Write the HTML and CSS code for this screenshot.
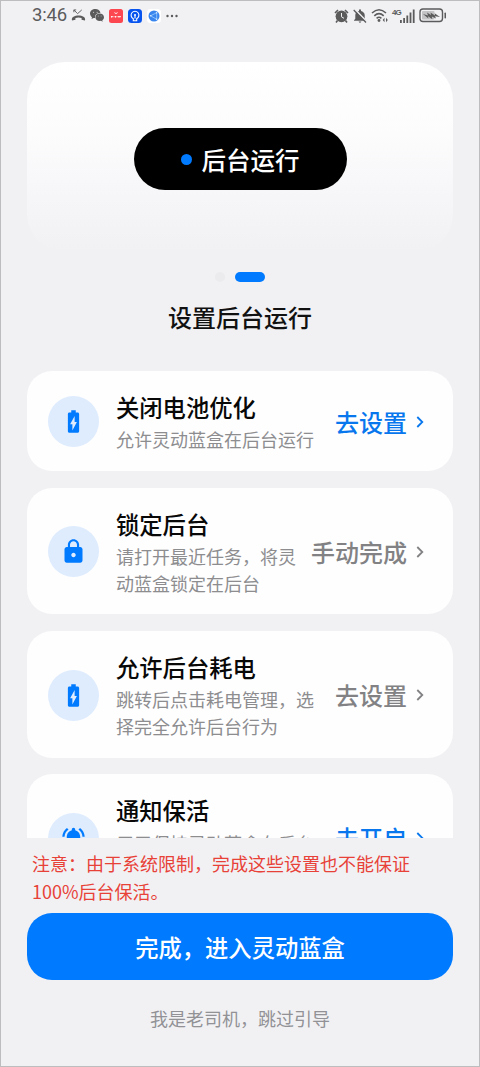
FILE: index.html
```html
<!DOCTYPE html>
<html lang="zh-CN">
<head>
<meta charset="utf-8">
<title>设置后台运行</title>
<link rel="stylesheet" href="styles.css">
</head>
<body>
<svg class="defs" width="0" height="0">
  <symbol id="battery" viewBox="0 0 24 24"><path d="M15.67 4H14V2h-4v2H8.33C7.6 4 7 4.6 7 5.33v15.33C7 21.4 7.6 22 8.33 22h7.33c.74 0 1.34-.6 1.34-1.33V5.33C17 4.6 16.4 4 15.67 4zM11 20v-5.5H9L13 7v5.5h2L11 20z"/></symbol>
  <symbol id="lock" viewBox="0 0 24 24"><path d="M18 8h-1V6c0-2.76-2.24-5-5-5S7 3.240 7 6v2H6c-1.100 0-2 .9-2 2v10c0 1.100.9 2 2 2h12c1.100 0 2-.9 2-2V10c0-1.100-.9-2-2-2zm-6 9c-1.100 0-2-.9-2-2s.9-2 2-2 2 .9 2 2-.9 2-2 2zm3.100-9H8.900V6c0-1.710 1.390-3.100 3.100-3.100s3.100 1.390 3.100 3.100v2z"/></symbol>
  <symbol id="bell" viewBox="0 0 24 24"><path d="M7.580 4.080L6.150 2.650C3.750 4.480 2.170 7.300 2.030 10.500h2c.15-2.650 1.510-4.970 3.550-6.420zm12.390 6.420h2c-.15-3.200-1.730-6.020-4.120-7.850l-1.420 1.430c2.020 1.450 3.390 3.770 3.540 6.420zM18 11c0-3.070-1.640-5.640-4.500-6.320V4c0-.83-.67-1.500-1.500-1.500s-1.500.67-1.500 1.500v.68C7.630 5.360 6 7.920 6 11v5l-2 2v1h16v-1l-2-2v-5zm-6 11c1.100 0 2-.9 2-2h-4c0 1.100.9 2 2 2z"/></symbol>
  <symbol id="chevron" viewBox="0 0 8 12"><path d="M1.300 1l5 5-5 5" fill="none" stroke="currentColor" stroke-width="1.800"/></symbol>
</svg>
<main class="phone">
  <header class="status">
    <div class="status-left">
      <span class="clock">3:46</span>
      <svg class="missed" viewBox="0 0 16 14"><path d="M1 12.500c-1-4 3-5.500 7-5.500s8 1.500 7 5.500l-3.700-.8V9.700q-3.300-1-6.600 0v2z"/><path d="M3 1l4 4 4.500-4M3 3.500V1h2.500" fill="none" stroke="currentColor"/></svg>
      <svg class="wechat" viewBox="0 0 14 13"><path d="M5.400 0C2.400 0 0 2 0 4.600c0 1.500.8 2.800 2 3.600L1.500 10l2.100-1.100 1.500.2C4.500 6 7 3.800 10.500 3.700 10 1.500 8 0 5.400 0z"/><path d="M9.700 4.400c-2.500 0-4.300 1.700-4.300 3.800S7.200 12 9.700 12l1.300-.2 1.700 1-.4-1.600c1-.7 1.700-1.700 1.700-3 0-2.100-1.900-3.800-4.300-3.800z"/><g fill="#f1f1f4"><circle cx="3.600" cy="3.200" r=".5"/><circle cx="7.100" cy="3.200" r=".5"/><circle cx="8.200" cy="7" r=".4"/><circle cx="11.100" cy="7" r=".4"/></g></svg>
      <svg class="app" viewBox="0 0 14 14"><rect width="14" height="14" rx="2.500" fill="#fc4650"/><path d="M5.400 3.600l1.600 1 1.600-1M2 7.700h2.500M5.500 7.700h2M8.500 7.700H12M2.500 8.500v-1.300M6.500 8.500v-1.300M10 8.500v-1.300" fill="none" stroke="#fff" stroke-width=".9"/></svg>
      <svg class="app" viewBox="0 0 14 14"><rect width="14" height="14" rx="3.500" fill="#0754ef"/><path d="M5.300 9.700a3.900 3.900 0 1 1 3.400 0v2.100H5.300zM7 6.500v3" fill="none" stroke="#fff" stroke-width="1.100"/><circle cx="7" cy="6" r="1" fill="#fff"/></svg>
      <svg class="app" viewBox="0 0 14 14"><rect width="14" height="14" rx="3.500" fill="#fff"/><circle cx="7" cy="7" r="5.500" fill="#3985ee"/><path d="M9.700 3.700L3.500 6.800l6.200 3.500z" fill="none" stroke="#9bcbff" stroke-width=".8"/><circle cx="9.600" cy="3.800" r=".8" fill="#d8edff"/><circle cx="3.700" cy="6.800" r=".8" fill="#d8edff"/><circle cx="9.600" cy="10.200" r=".8" fill="#d8edff"/></svg>
      <svg class="more" viewBox="0 0 12 4"><circle cx="1.500" cy="2" r="1.200"/><circle cx="6" cy="2" r="1.200"/><circle cx="10.500" cy="2" r="1.200"/></svg>
    </div>
    <div class="status-right">
      <svg class="alarm" viewBox="0 0 15 14"><circle cx="7.500" cy="7.300" r="5.900"/><path d="M1 4l3-3M14 4l-3-3M3.500 11.500L2 13.400M11.500 11.500l1.500 1.900" stroke="currentColor" stroke-width="1.600"/><path d="M7.500 4v3.800l2.500 1.500" fill="none" stroke="#f1f1f4" stroke-width="1"/></svg>
      <svg class="mute" viewBox="0 0 14 14"><path d="M2.300 9.700V6c0-2.200 1.800-3.700 3.700-4V.5h2V2c1.900.4 3.700 2 3.700 4v3.700l1.300 1.500v.6H1v-.6zM5.500 12.500h3L7 14z"/><path d="M2 .5l12 12.500" stroke="#f1f1f4" stroke-width="1.800"/><path d="M.7 1l12.300 12.500" stroke="currentColor" stroke-width="1.300"/></svg>
      <svg class="wifi" viewBox="0 0 18 15"><path d="M1 5Q8 -1.500 15 5M3.300 7.800q4.700-4.300 9.400 0M5.600 10.300Q8 8.200 10.400 10.300" fill="none" stroke="currentColor" stroke-width="1.600"/><circle cx="8" cy="12.500" r="1.400"/><path d="M13.500 9.800L11.700 12l1.800 2.200zM15 9.800L16.800 12 15 14.200z"/></svg>
      <div class="cell"><span class="net">4G</span>
      <svg class="signal" viewBox="0 0 15 14"><path d="M0 11h1.800v3H0zM3.200 9H5v5H3.200zM6.400 6.500h1.800V14H6.400zM9.600 3.500h1.800V14H9.600zM12.800.5h1.800V14h-1.800z"/></svg></div>
      <svg class="power" viewBox="0 0 28 15"><rect x="1" y="1" width="22.500" height="12.500" rx="3" fill="none" stroke="currentColor" stroke-width="1.400"/><rect x="3" y="3" width="12.500" height="8.500" rx="1" opacity=".3"/><path d="M4 6l5 1.500-1-3 4 2.600-.5-2.700 4.500 3-.4-2.200L21 9l-5-.8 1 2.400-4.200-2.100.6 2.700-4.400-3 .4 2.300z"/><rect x="25.500" y="4.500" width="1.500" height="6" rx=".7"/></svg>
    </div>
  </header>
  <section class="hero"><div class="island"><i class="island-dot"></i><span>后台运行</span></div></section>
  <div class="pager"><i class="page"></i><i class="page current"></i></div>
  <h1 class="title">设置后台运行</h1>
  <section class="list">
    <article class="card">
      <div class="badge"><svg class="icon"><use href="#battery"/></svg></div>
      <div class="info"><h2 class="name">关闭电池优化</h2><p class="desc">允许灵动蓝盒在后台运行</p></div>
      <div class="action primary"><span>去设置</span><svg class="chevron"><use href="#chevron"/></svg></div>
    </article>
    <article class="card">
      <div class="badge"><svg class="icon"><use href="#lock"/></svg></div>
      <div class="info"><h2 class="name">锁定后台</h2><p class="desc">请打开最近任务，将灵动蓝盒锁定在后台</p></div>
      <div class="action"><span>手动完成</span><svg class="chevron"><use href="#chevron"/></svg></div>
    </article>
    <article class="card">
      <div class="badge"><svg class="icon"><use href="#battery"/></svg></div>
      <div class="info"><h2 class="name">允许后台耗电</h2><p class="desc">跳转后点击耗电管理，选择完全允许后台行为</p></div>
      <div class="action"><span>去设置</span><svg class="chevron"><use href="#chevron"/></svg></div>
    </article>
    <article class="card">
      <div class="badge"><svg class="icon"><use href="#bell"/></svg></div>
      <div class="info"><h2 class="name">通知保活</h2><p class="desc">用于保持灵动蓝盒在后台持续稳定运行</p></div>
      <div class="action primary"><span>去开启</span><svg class="chevron"><use href="#chevron"/></svg></div>
    </article>
  </section>
  <footer class="footer">
    <p class="notice">注意：由于系统限制，完成这些设置也不能保证100%后台保活。</p>
    <button class="finish">完成，进入灵动蓝盒</button>
    <a class="skip">我是老司机，跳过引导</a>
  </footer>
</main>
</body>
</html>
```
FILE: styles.css
```css
* { box-sizing: border-box; }
body { margin: 0; font-family: "Noto Sans CJK SC", sans-serif; }
.defs { display: none; }
svg { display: block; flex: none; fill: currentColor; }
h1, h2, p { margin: 0; font-weight: 500; }
.phone {
  display: flex;
  flex-direction: column;
  height: 1067px;
  padding: 0 26px;
  overflow: hidden;
  border: 1px solid #bdbdc0;
  background: #f1f1f4;
}

.status { display: flex; justify-content: space-between; height: 61px; padding: 0 6px 0 5px; color: #5b5b5c; }
.status-left, .status-right { display: flex; align-items: center; height: 29px; }
.clock { width: 38px; font: 18.5px/29px Roboto, sans-serif; letter-spacing: -0.2px; white-space: nowrap; }
.missed { width: 15px; height: 13px; margin-left: 1px; }
.wechat { width: 14px; height: 13px; margin: 0 5px 0 4px; }
.app { width: 14px; height: 14px; margin-right: 5px; }
.more { width: 12px; height: 4px; }
.status-right { gap: 4px; }
.alarm { width: 15px; height: 14px; }
.mute { width: 14px; height: 14px; }
.wifi { width: 18px; height: 15px; }
.cell { display: flex; align-items: center; margin-left: -1px; }
.net { align-self: flex-start; width: 8px; margin-top: -1px; font: bold 8px/9px "Liberation Sans", sans-serif; letter-spacing: -1px; }
.signal { width: 15px; height: 14px; }
.power { width: 28px; height: 15px; }

.hero {
  display: flex;
  flex: none;
  justify-content: center;
  height: 190px;
  padding-top: 66px;
  border-radius: 38px;
  background: linear-gradient(#fff 0%, #fcfcfd 38%, #f1f1f4 100%);
}
.island {
  display: flex;
  align-items: center;
  justify-content: center;
  gap: 10px;
  width: 213px;
  height: 62px;
  padding-top: 1px;
  border-radius: 31px;
  background: #000;
  color: #fff;
  font-size: 24.5px;
  font-weight: 500;
}
.island-dot { width: 11px; height: 11px; border-radius: 50%; background: #007aff; }
.pager { display: flex; flex: none; justify-content: center; gap: 10px; height: 10px; margin-top: 20px; }
.page { width: 10px; height: 10px; border-radius: 5px; background: #ebebee; }
.current { width: 30px; background: #007aff; }
.title { flex: none; margin-top: 17px; color: #111; font-size: 24px; line-height: 36px; text-align: center; }

.list { display: flex; flex: none; flex-direction: column; gap: 16.75px; height: 503px; padding-top: 36px; overflow: hidden; }
.card {
  display: flex;
  flex: none;
  align-items: center;
  padding: 19px 28px 18.25px 21px;
  border-radius: 25px;
  background: #fefefe;
}
.badge {
  display: grid;
  flex: none;
  place-items: center;
  width: 51px;
  height: 51px;
  margin: 1px 17px 0 0;
  border-radius: 50%;
  background: #deecfe;
  color: #007aff;
}
.icon { width: 27px; height: 27px; }
.info { flex: 1; min-width: 0; }
.name { color: #080808; font-size: 23.3px; line-height: 34px; }
.desc { margin-top: 2.250px; color: #8d8d90; font-size: 18px; font-weight: 400; line-height: 26.500px; }
.action { display: flex; flex: none; align-items: center; gap: 9px; margin: 1px 0 0 9px; color: #828284; font-size: 24px; font-weight: 500; line-height: 34px; }
.action { margin-right: 1px; }
.primary { color: #0877ee; }
.chevron { width: 8px; height: 12px; }

.footer { display: flex; flex-direction: column; align-items: center; padding-top: 11px; }
.notice { align-self: stretch; padding: 0 5px; color: #e84238; font-size: 18px; font-weight: 400; line-height: 28px; }
.finish {
  width: 100%;
  height: 67px;
  margin-top: 8px;
  padding: 0;
  border: 0;
  border-radius: 25px;
  background: #007aff;
  color: #fff;
  font: 500 23.3px/34px "Noto Sans CJK SC", sans-serif;
}
.skip { margin-top: 25px; color: #919196; font-size: 18px; line-height: 27px; }
```
